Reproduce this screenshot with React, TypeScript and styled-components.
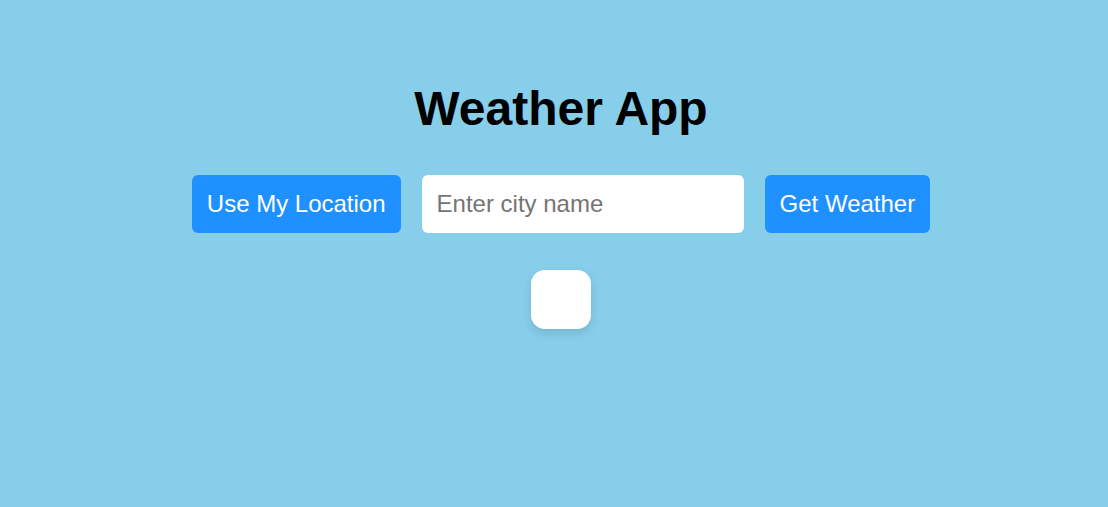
import React, {useState} from 'react';
import styled, {createGlobalStyle} from 'styled-components';

const GlobalStyle = createGlobalStyle`
  html, body {
    margin: 0;
    padding: 0;
    background: #87ceeb;
  }
  body {
    font-family: "Liberation Sans", Arial, sans-serif;
  }
`;

/**
 * Main app component
 */
export default function App() {
    const [city, setCity] = useState('');

    return (
        <AppContainer>
            <GlobalStyle />
            <Title>Weather App</Title>
            <SearchRow>
                <ActionButton type='button'>Use My Location</ActionButton>
                <CityInput
                    type='text'
                    placeholder='Enter city name'
                    value={city}
                    onChange={(e) => setCity(e.target.value)}
                />
                <ActionButton type='button'>Get Weather</ActionButton>
            </SearchRow>
            <WeatherCard />
        </AppContainer>
    );
}

const AppContainer = styled.div`
  display: flex;
  flex-flow: column nowrap;
  align-items: center;
  min-height: 507px;
  padding: 81px 0 0 14px;
  box-sizing: border-box;
`;

const Title = styled.h1`
  margin: 0 0 39px;
  font-size: 48px;
  font-weight: bold;
  color: #000;
  line-height: normal;
`;

const SearchRow = styled.div`
  display: flex;
  align-items: center;
  gap: 21px;
`;

const ActionButton = styled.button`
  height: 58px;
  padding: 0 15px;
  border: none;
  border-radius: 6px;
  background: #1e90ff;
  color: #fff;
  font-family: "Liberation Sans", Arial, sans-serif;
  font-size: 24px;
  cursor: pointer;
`;

const CityInput = styled.input`
  width: 322px;
  height: 58px;
  box-sizing: border-box;
  padding: 0 15px;
  border: none;
  border-radius: 6px;
  background: #fff;
  font-family: "Liberation Sans", Arial, sans-serif;
  font-size: 24px;
  outline: none;

  &::placeholder {
    color: #757575;
  }
`;

const WeatherCard = styled.div`
  width: 60px;
  height: 59px;
  margin-top: 37px;
  background: #fff;
  border-radius: 14px;
  box-shadow: 0 4px 10px rgba(0, 0, 0, 0.12);
`;
